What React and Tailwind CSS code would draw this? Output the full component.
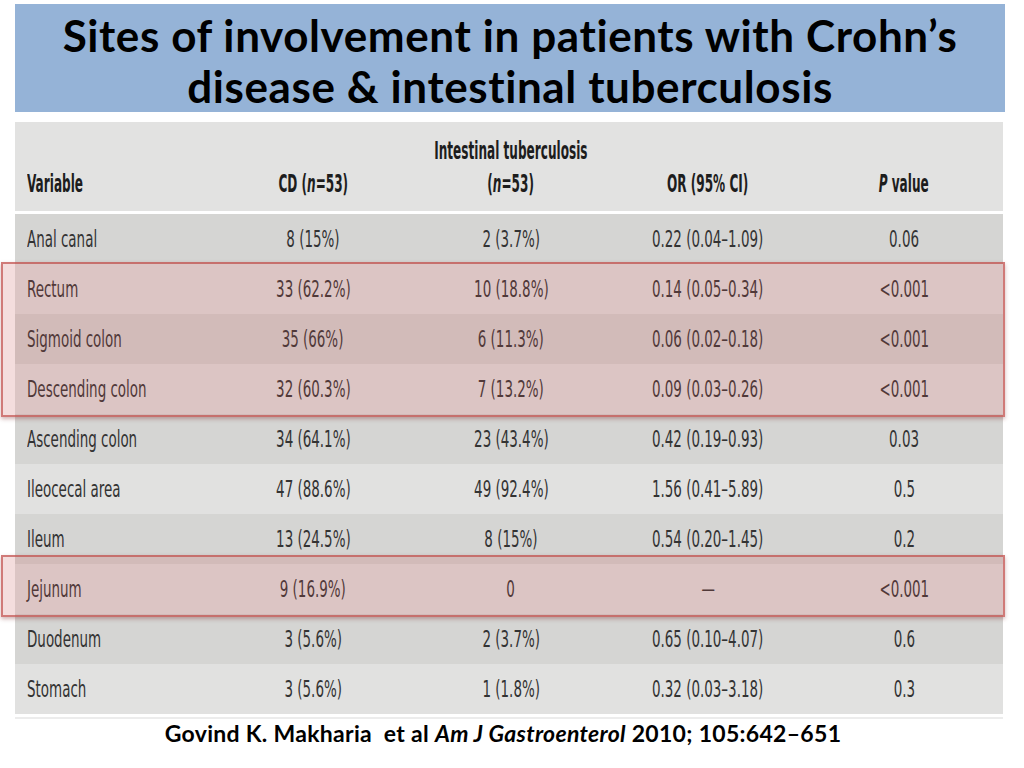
const rows = [
  ['Anal canal', '8 (15%)', '2 (3.7%)', '0.22 (0.04–1.09)', '0.06'],
  ['Rectum', '33 (62.2%)', '10 (18.8%)', '0.14 (0.05–0.34)', '<0.001'],
  ['Sigmoid colon', '35 (66%)', '6 (11.3%)', '0.06 (0.02–0.18)', '<0.001'],
  ['Descending colon', '32 (60.3%)', '7 (13.2%)', '0.09 (0.03–0.26)', '<0.001'],
  ['Ascending colon', '34 (64.1%)', '23 (43.4%)', '0.42 (0.19–0.93)', '0.03'],
  ['Ileocecal area', '47 (88.6%)', '49 (92.4%)', '1.56 (0.41–5.89)', '0.5'],
  ['Ileum', '13 (24.5%)', '8 (15%)', '0.54 (0.20–1.45)', '0.2'],
  ['Jejunum', '9 (16.9%)', '0', '—', '<0.001'],
  ['Duodenum', '3 (5.6%)', '2 (3.7%)', '0.65 (0.10–4.07)', '0.6'],
  ['Stomach', '3 (5.6%)', '1 (1.8%)', '0.32 (0.03–3.18)', '0.3'],
];

const cols = 'grid grid-cols-[200px_196px_200px_194px_198px]';
const narrow = { fontFamily: '"DejaVu Sans Condensed", "Liberation Sans", sans-serif' };
const calib = { fontFamily: 'Lato, "Liberation Sans", sans-serif' };

// condensed cell text, squeezed horizontally like the scanned table
function Cell({ left, head, children }) {
  const squeeze = head ? 'scale-x-[0.56]' : 'scale-x-[0.65]';
  return (
    <div className={left ? 'pl-[12px]' : 'flex justify-center'}>
      <span className={`inline-block whitespace-nowrap ${squeeze} ${left ? 'origin-left' : 'origin-center'}`}>
        {children}
      </span>
    </div>
  );
}

export default function App() {
  return (
    <div className="relative w-[1024px] h-[768px] bg-white overflow-hidden">
      {/* Title */}
      <div className="pt-[4px] pl-[15px]">
        <div
          className="w-[990px] h-[108px] pt-[6px] bg-[#95b3d7] flex flex-col items-center justify-center text-black font-bold text-[44px] leading-[51px] tracking-[0.6px]"
          style={calib}
        >
          <div>Sites of involvement in patients with Crohn’s</div>
          <div>disease &amp; intestinal tuberculosis</div>
        </div>
      </div>

      {/* Table */}
      <div className="mt-[10px] ml-[15px] w-[988px] text-[#333333] text-[23px]" style={narrow}>
        <div className={`${cols} h-[89px] bg-[#e2e2e1] font-bold text-[24px] text-[#1d1d1d] items-end pb-[10px] leading-[33px]`}>
          <Cell left head>Variable</Cell>
          <Cell head>CD (<i>n</i>=53)</Cell>
          <div>
            <Cell head>Intestinal tuberculosis</Cell>
            <Cell head>(<i>n</i>=53)</Cell>
          </div>
          <Cell head>OR (95% CI)</Cell>
          <Cell head><i>P</i> value</Cell>
        </div>
        <div className="h-[3px] bg-white" />
        {rows.map((r, i) => (
          <div key={r[0]} className={`${cols} h-[50px] items-center ${i % 2 === 0 ? 'bg-[#d5d5d3]' : 'bg-[#e1e1e0]'}`}>
            <Cell left>{r[0]}</Cell>
            <Cell>{r[1]}</Cell>
            <Cell>{r[2]}</Cell>
            <Cell>{r[3]}</Cell>
            <Cell>{r[4]}</Cell>
          </div>
        ))}
        <div className="h-[3px] bg-white" />
        <div className="h-[2px] bg-[#ececec]" />
      </div>

      {/* Citation */}
      <div className="pr-[18px] text-center font-bold text-[23px] leading-[28px] tracking-[0.3px] text-black" style={calib}>
        Govind K. Makharia&nbsp; et al <i>Am J Gastroenterol</i> 2010; 105:642–651
      </div>

      {/* Highlights */}
      <div className="absolute left-[1px] top-[262px] w-[1004px] h-[155px] border-2 border-[#c0504d]/70 bg-[#c85555]/20 shadow-[0_2px_4px_rgba(120,40,40,0.35)]" />
      <div className="absolute left-[1px] top-[555px] w-[1004px] h-[62px] border-2 border-[#c0504d]/70 bg-[#c85555]/20 shadow-[0_2px_4px_rgba(120,40,40,0.35)]" />
    </div>
  );
}
